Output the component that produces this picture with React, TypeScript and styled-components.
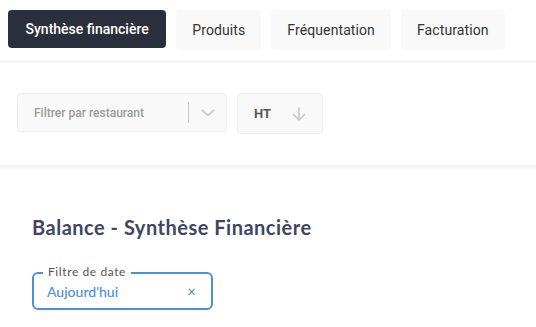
import React from "react";
import styled, { createGlobalStyle } from "styled-components";

const Global = createGlobalStyle`
  html, body { margin: 0; padding: 0; background: #ffffff; }
  body { font-family: Roboto, "Liberation Sans", sans-serif; }
  * { box-sizing: border-box; }
`;

const Page = styled.div`
  width: 536px;
  display: flex;
  flex-direction: column;
`;

const TabBar = styled.nav`
  display: flex;
  align-items: flex-start;
  gap: 10px;
  padding: 10px 8px 10px 8px;
  height: 60px;
`;

const Tab = styled.button<{ $active?: boolean }>`
  font-family: Roboto, "Liberation Sans", sans-serif;
  font-size: 14px;
  font-weight: ${(p) => (p.$active ? 500 : 400)};
  letter-spacing: ${(p) => (p.$active ? "0" : "0.1px")};
  height: ${(p) => (p.$active ? "38px" : "40px")};
  padding: ${(p) => (p.$active ? "0 17.5px" : "0 16px")};
  border: none;
  border-radius: 4px;
  background: ${(p) => (p.$active ? "#2b2e3b" : "#f9f9f9")};
  color: ${(p) => (p.$active ? "#ffffff" : "#333333")};
  cursor: pointer;
  display: flex;
  align-items: center;
`;

const Separator = styled.div`
  height: 3px;
  background: #f7f7f7;
`;

const FilterSection = styled.section`
  height: 102px;
  padding: 30px 17px 0;
  display: flex;
  align-items: flex-start;
  gap: 10px;
`;

const Shadow = styled.div`
  height: 6px;
  background: linear-gradient(#f4f4f4, #ffffff);
`;

const Select = styled.div`
  width: 210px;
  height: 39px;
  background: #f9f9f9;
  border: 1px solid #ededed;
  border-radius: 4px;
  display: flex;
  align-items: center;
  padding-left: 16px;
`;

const Placeholder = styled.span`
  flex: 1;
  font-size: 12px;
  font-weight: 500;
  color: #9a9a9a;
`;

const Divider = styled.span`
  width: 1px;
  height: 21px;
  background: #cccccc;
`;

const IconSlot = styled.span`
  width: 37px;
  display: flex;
  align-items: center;
  justify-content: center;
`;

const TaxToggle = styled.div`
  width: 86px;
  height: 41px;
  background: #f9f9f9;
  border: 1px solid #ededed;
  border-radius: 4px;
  display: flex;
  align-items: center;
  padding-left: 16px;
  gap: 21px;
`;

const TaxLabel = styled.span`
  font-size: 13px;
  font-weight: 700;
  color: #555555;
`;

const Content = styled.main`
  padding: 44px 32px 0;
  display: flex;
  flex-direction: column;
  align-items: flex-start;
`;

const Title = styled.h1`
  margin: 0;
  font-family: Lato, "Liberation Sans", sans-serif;
  font-size: 20px;
  line-height: 24px;
  font-weight: 700;
  letter-spacing: 0.5px;
  color: #3e4663;
`;

const DateField = styled.div`
  position: relative;
  margin-top: 33px;
  width: 181px;
  height: 38px;
  border: 2px solid #4a90dc;
  border-radius: 6px;
  display: flex;
  align-items: center;
  padding: 0 15px 0 13px;
`;

const Legend = styled.span`
  position: absolute;
  top: -9px;
  left: 9px;
  padding: 0 5px;
  background: #ffffff;
  font-family: Lato, "Liberation Sans", sans-serif;
  font-size: 12px;
  line-height: 14px;
  letter-spacing: 0.6px;
  color: #555555;
`;

const DateValue = styled.span`
  flex: 1;
  font-family: Lato, "Liberation Sans", sans-serif;
  font-size: 14px;
  font-weight: 500;
  color: #4a8fdb;
`;

const Clear = styled.span`
  font-family: Lato, "Liberation Sans", sans-serif;
  font-size: 15px;
  color: #4a8fdb;
`;

export default function App() {
  return (
    <Page>
      <Global />
      <TabBar>
        <Tab $active>Synthèse financière</Tab>
        <Tab>Produits</Tab>
        <Tab>Fréquentation</Tab>
        <Tab>Facturation</Tab>
      </TabBar>
      <Separator />
      <FilterSection>
        <Select>
          <Placeholder>Filtrer par restaurant</Placeholder>
          <Divider />
          <IconSlot>
            <svg width="14" height="8" viewBox="0 0 14 8" fill="none">
              <path d="M1.5 1.5 L7 6.5 L12.5 1.5" stroke="#cccccc" strokeWidth="2" strokeLinecap="round" strokeLinejoin="round" />
            </svg>
          </IconSlot>
        </Select>
        <TaxToggle>
          <TaxLabel>HT</TaxLabel>
          <svg width="14" height="14" viewBox="0 0 14 14" fill="none">
            <path d="M7 1 V13 M1.5 7.5 L7 13 L12.5 7.5" stroke="#c8c8c8" strokeWidth="1.6" strokeLinecap="round" strokeLinejoin="round" />
          </svg>
        </TaxToggle>
      </FilterSection>
      <Shadow />
      <Content>
        <Title>Balance - Synthèse Financière</Title>
        <DateField>
          <Legend>Filtre de date</Legend>
          <DateValue>Aujourd'hui</DateValue>
          <Clear>×</Clear>
        </DateField>
      </Content>
    </Page>
  );
}
